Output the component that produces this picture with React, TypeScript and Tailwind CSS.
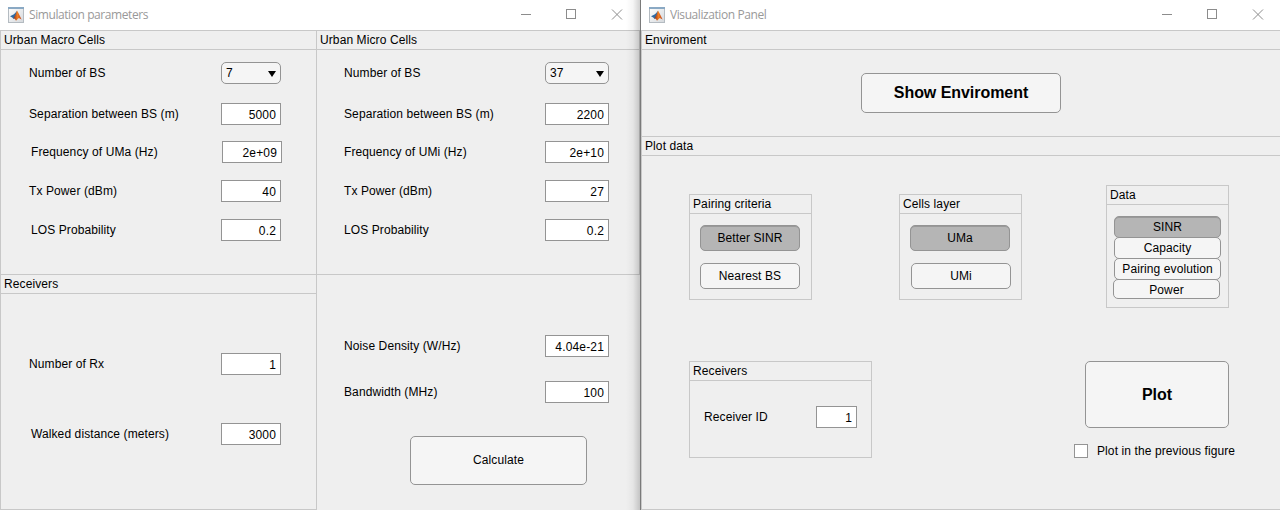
import React from "react";

function MatlabIcon() {
  return (
    <svg width="16" height="16" viewBox="0 0 16 16" className="block">
      <defs>
        <linearGradient id="paper" x1="0" y1="0" x2="1" y2="1">
          <stop offset="0" stopColor="#ffffff" />
          <stop offset="1" stopColor="#d4d8dc" />
        </linearGradient>
        <linearGradient id="flame" x1="0" y1="0" x2="1" y2="0">
          <stop offset="0" stopColor="#8a2a1c" />
          <stop offset="0.5" stopColor="#ee7d22" />
          <stop offset="1" stopColor="#c2451f" />
        </linearGradient>
      </defs>
      <rect x="0.5" y="0.5" width="15" height="15" fill="url(#paper)" stroke="#b4bbc1" />
      <rect x="0" y="0" width="16" height="2" fill="#8aa9c4" />
      <path d="M2 9.3 L5.5 7.6 L7 6.2 L9 3.8 L8 9 L5.8 12 L4.2 10.6 Z" fill="#2f6ba3" />
      <path d="M5.4 11.6 L7.4 8 L9 3.6 L10.8 6.8 L13.6 12.6 L10.8 11 L8 13.8 L6.8 11.8 Z" fill="url(#flame)" />
    </svg>
  );
}

function TitleBar({ title, controls }: { title: string; controls: string }) {
  return (
    <div className="flex h-[30px] shrink-0 items-center bg-white pl-2">
      <MatlabIcon />
      <span className="ml-[5px] grow font-['Open_Sans',sans-serif] text-[12px] leading-[16px] tracking-[-0.42px] text-[#999999]">
        {title}
      </span>
      <svg width="110" height="12" viewBox="0 0 110 12" fill="none" stroke="#8c8c8c" className={"block " + controls} shapeRendering="crispEdges">
        <path d="M4 5.5h10" />
        <rect x="49.5" y="0.5" width="9" height="9" />
        <path d="M95 0.5l10 10M105 0.5l-10 10" shapeRendering="auto" />
      </svg>
    </div>
  );
}

function PanelTitle({ children }: { children: React.ReactNode }) {
  return (
    <div className="h-[19px] shrink-0 border-b border-[#c8c8c8] pl-[3px] leading-[18px]">{children}</div>
  );
}

function Field({ label, value, row, labelBox, box }: { label: string; value: string; row: string; labelBox: string; box: string }) {
  return (
    <div className={"flex h-[22px] shrink-0 items-center " + row}>
      <span className={"shrink-0 whitespace-nowrap " + labelBox}>{label}</span>
      <span className={"flex h-[22px] shrink-0 items-center justify-end border border-[#949494] bg-white pt-[2px] pr-[4px] tracking-[0.16px] " + box}>
        {value}
      </span>
    </div>
  );
}

function Dropdown({ label, value, row, labelBox, box }: { label: string; value: string; row: string; labelBox: string; box: string }) {
  return (
    <div className={"flex h-[22px] shrink-0 items-center " + row}>
      <span className={"shrink-0 whitespace-nowrap " + labelBox}>{label}</span>
      <span className={"flex h-[22px] shrink-0 items-center justify-between rounded-[5px] border border-[#949494] bg-[#f5f5f5] pr-[4px] pl-[4px] " + box}>
        {value}
        <svg width="8" height="6" viewBox="0 0 8 6" className="mt-[2px] block">
          <path d="M0 0h8L4 6z" fill="#000" />
        </svg>
      </span>
    </div>
  );
}

function Btn({ children, size, on }: { children: React.ReactNode; size: string; on?: boolean }) {
  return (
    <button
      className={
        "flex shrink-0 items-center justify-center rounded-[5px] border border-[#949494] " +
        (on ? "bg-[#b5b5b5] shadow-[inset_0_1px_0_#999999] " : "bg-[#f5f5f5] ") +
        size
      }
    >
      {children}
    </button>
  );
}

export default function App() {
  return (
    <div className="flex h-[510px] w-[1280px] overflow-hidden bg-[#efefef] font-['Liberation_Sans',Arial,sans-serif] text-[12px] leading-[14px] tracking-[0.1px] text-black">
      <div className="relative flex w-[640px] shrink-0 flex-col">
        <TitleBar title="Simulation parameters" controls="mr-[13px]" />
        <div className="flex h-[480px]">
          <div className="flex w-[317px] shrink-0 flex-col border-x border-[#c8c8c8]">
            <section className="flex h-[244px] shrink-0 flex-col border-t border-[#c8c8c8]">
              <PanelTitle>Urban Macro Cells</PanelTitle>
              <Dropdown label="Number of BS" value="7" row="mt-[12px] pl-[28px]" labelBox="w-[192px]" box="w-[60px]" />
              <Field label="Separation between BS (m)" value="5000" row="mt-[19px] pl-[28px]" labelBox="w-[192px]" box="w-[60px]" />
              <Field label="Frequency of UMa (Hz)" value="2e+09" row="mt-[16px] pl-[30px]" labelBox="w-[191px]" box="w-[60px]" />
              <Field label="Tx Power (dBm)" value="40" row="mt-[17px] pl-[28px]" labelBox="w-[192px]" box="w-[60px]" />
              <Field label="LOS Probability" value="0.2" row="mt-[17px] pl-[30px]" labelBox="w-[190px]" box="w-[60px]" />
            </section>
            <section className="flex h-[236px] shrink-0 flex-col border-y border-[#c8c8c8]">
              <PanelTitle>Receivers</PanelTitle>
              <Field label="Number of Rx" value="1" row="mt-[59px] pl-[28px]" labelBox="w-[192px]" box="w-[60px]" />
              <Field label="Walked distance (meters)" value="3000" row="mt-[48px] pl-[30px]" labelBox="w-[190px]" box="w-[60px]" />
            </section>
          </div>
          <div className="flex w-[323px] shrink-0 flex-col">
            <section className="flex h-[245px] shrink-0 flex-col border-y border-r border-[#c8c8c8]">
              <PanelTitle>Urban Micro Cells</PanelTitle>
              <Dropdown label="Number of BS" value="37" row="mt-[12px] pl-[27px]" labelBox="w-[201px]" box="w-[64px]" />
              <Field label="Separation between BS (m)" value="2200" row="mt-[19px] pl-[27px]" labelBox="w-[201px]" box="w-[64px]" />
              <Field label="Frequency of UMi (Hz)" value="2e+10" row="mt-[16px] pl-[27px]" labelBox="w-[201px]" box="w-[64px]" />
              <Field label="Tx Power (dBm)" value="27" row="mt-[17px] pl-[27px]" labelBox="w-[201px]" box="w-[64px]" />
              <Field label="LOS Probability" value="0.2" row="mt-[17px] pl-[27px]" labelBox="w-[201px]" box="w-[64px]" />
            </section>
            <Field label="Noise Density (W/Hz)" value="4.04e-21" row="mt-[60px] pl-[27px]" labelBox="w-[201px]" box="w-[64px]" />
            <Field label="Bandwidth (MHz)" value="100" row="mt-[24px] pl-[27px]" labelBox="w-[201px]" box="w-[64px]" />
            <div className="mt-[33px] pl-[93px]">
              <Btn size="h-[49px] w-[177px] pb-[2px]">Calculate</Btn>
            </div>
          </div>
        </div>
        <div className="pointer-events-none absolute top-0 right-0 h-full w-[14px] bg-linear-to-r from-black/0 via-black/4 to-black/18" />
      </div>

      <div className="flex w-[640px] shrink-0 flex-col border-l border-[#7a7a7a]">
        <TitleBar title="Visualization Panel" controls="mr-[12px]" />
        <section className="flex h-[106px] shrink-0 flex-col border-t border-l border-[#c8c8c8]">
          <PanelTitle>Enviroment</PanelTitle>
          <div className="mt-[23px] pl-[219px]">
            <Btn size="h-[40px] w-[200px] text-[16px] font-bold tracking-[-0.05px]">Show Enviroment</Btn>
          </div>
        </section>
        <section className="flex h-[374px] shrink-0 flex-col border-y border-l border-[#c8c8c8]">
          <PanelTitle>Plot data</PanelTitle>
          <div className="mt-[29px] flex h-[123px] shrink-0 pl-[47px]">
            <div className="mt-[9px] flex h-[106px] w-[123px] flex-col border border-[#c8c8c8]">
              <PanelTitle>Pairing criteria</PanelTitle>
              <div className="mt-[11px] flex flex-col gap-[12px] pl-[10px]">
                <Btn on size="h-[26px] w-[100px]">Better SINR</Btn>
                <Btn size="h-[26px] w-[100px]">Nearest BS</Btn>
              </div>
            </div>
            <div className="mt-[9px] ml-[87px] flex h-[106px] w-[123px] flex-col border border-[#c8c8c8]">
              <PanelTitle>Cells layer</PanelTitle>
              <div className="mt-[11px] flex flex-col gap-[12px] pl-[10px]">
                <Btn on size="h-[26px] w-[100px]">UMa</Btn>
                <Btn size="ml-px h-[26px] w-[100px]">UMi</Btn>
              </div>
            </div>
            <div className="ml-[84px] flex h-[123px] w-[123px] flex-col border border-[#c8c8c8]">
              <PanelTitle>Data</PanelTitle>
              <div className="mt-[11px] flex flex-col pl-[6px]">
                <Btn on size="ml-px h-[22px] w-[107px]">SINR</Btn>
                <Btn size="-mt-px ml-px h-[22px] w-[107px]">Capacity</Btn>
                <Btn size="-mt-px ml-px h-[22px] w-[107px]">Pairing evolution</Btn>
                <Btn size="-mt-px h-[20px] w-[107px] pt-[2px]">Power</Btn>
              </div>
            </div>
          </div>
          <div className="mt-[53px] flex pl-[47px]">
            <div className="flex h-[97px] w-[183px] flex-col border border-[#c8c8c8]">
              <PanelTitle>Receivers</PanelTitle>
              <Field label="Receiver ID" value="1" row="mt-[25px] pl-[14px]" labelBox="w-[112px]" box="w-[41px]" />
            </div>
            <div className="ml-[202px] flex flex-col">
              <div className="pl-[11px]">
                <Btn size="h-[67px] w-[144px] text-[16px] font-bold tracking-[-0.05px]">Plot</Btn>
              </div>
              <label className="mt-[16px] flex items-center gap-[9px]">
                <span className="block h-[14px] w-[14px] border border-[#949494] bg-white" />
                <span>Plot in the previous figure</span>
              </label>
            </div>
          </div>
        </section>
      </div>
    </div>
  );
}
